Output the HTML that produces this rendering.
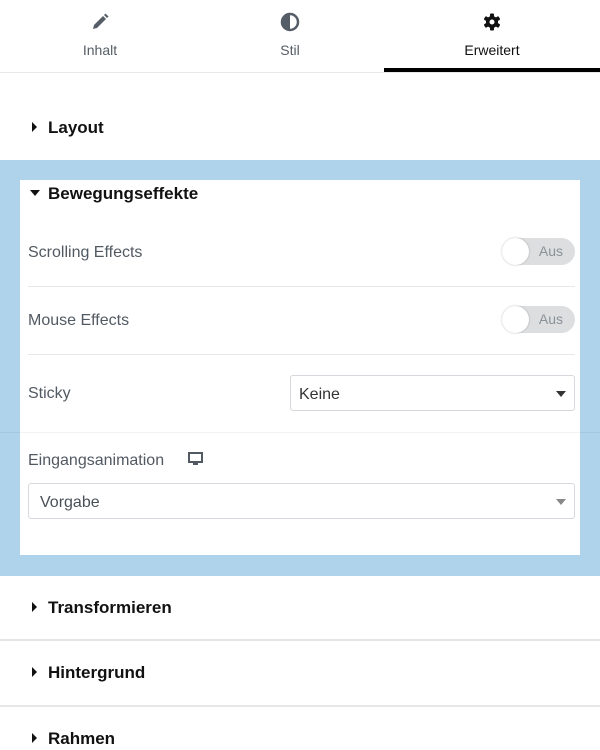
<!DOCTYPE html>
<html><head><meta charset="utf-8"><style>
*{margin:0;padding:0;box-sizing:border-box}
body{width:600px;height:750px;overflow:hidden;background:#fff;font-family:"Liberation Sans",sans-serif;position:relative}
.a{position:absolute}
.tab{position:absolute;top:0;height:72px;width:200px;text-align:center;font-size:14px;color:#555d66}
.tab svg{position:absolute;left:50%;top:12px;margin-left:-10px}
.tab span{position:absolute;top:42px;left:0;right:0}
.h{position:absolute;font-weight:bold;font-size:17px;color:#111;left:48px}
.tri{position:absolute;width:0;height:0;border-top:5px solid transparent;border-bottom:5px solid transparent;border-left:5px solid #111;left:32px}
.lbl{position:absolute;left:28px;font-size:16px;color:#515962}
.sw{position:absolute;left:502px;width:73px;height:27px;border-radius:14px;background:#dcdee0}
.sw i{position:absolute;left:0;top:0;width:27px;height:27px;border-radius:50%;background:#fff;box-shadow:0 0 2px rgba(0,0,0,.25)}
.sw b{position:absolute;right:12px;top:5px;font-size:14px;font-weight:normal;color:#8b9199}
.sep{position:absolute;left:28px;width:547px;height:1px;background:#e6e8ea}
.sel{position:absolute;border:1px solid #d5d8dc;border-radius:3px;background:#fff;font-size:16px;color:#495057}
</style></head><body>
<div class="tab" style="left:0"><svg width="20" height="20" viewBox="0 0 20 20"><path d="M3 17l1-4 9-9 3 3-9 9z" fill="#555d66"/><path d="M14 3l1.5-1.5 3 3L17 6z" fill="#555d66"/></svg><span>Inhalt</span></div>
<div class="tab" style="left:190px"><svg width="20" height="20" viewBox="0 0 20 20"><circle cx="10" cy="10" r="8" fill="none" stroke="#555d66" stroke-width="2.5"/><path d="M10 2a8 8 0 0 0 0 16z" fill="#555d66"/></svg><span>Stil</span></div>
<div class="tab" style="left:384px;width:216px;color:#111"><svg width="20" height="20" viewBox="0 0 20 20"><g fill="#111"><circle cx="10" cy="10" r="6"/><rect x="8" y="1.5" width="4" height="17" rx="1"/><rect x="8" y="1.5" width="4" height="17" rx="1" transform="rotate(60 10 10)"/><rect x="8" y="1.5" width="4" height="17" rx="1" transform="rotate(120 10 10)"/></g><circle cx="10" cy="10" r="2.5" fill="#fff"/></svg><span>Erweitert</span></div>
<div class="a" style="left:0;top:72px;width:600px;height:1px;background:#e6e8ea"></div>
<div class="a" style="left:384px;top:68px;width:216px;height:4px;background:#000"></div>

<div class="tri" style="top:122px"></div><div class="h" style="top:118px">Layout</div>

<div class="a" style="left:0;top:160px;width:600px;height:416px;background:#aed3ea"></div>
<div class="a" style="left:20px;top:180px;width:560px;height:375px;background:#fff"></div>
<div class="a" style="left:0;top:432px;width:600px;height:1px;background:rgba(0,0,0,.05)"></div>
<div class="a" style="left:30px;top:190px;width:0;height:0;border-left:5px solid transparent;border-right:5px solid transparent;border-top:6px solid #111"></div>
<div class="h" style="top:184px">Bewegungseffekte</div>

<div class="lbl" style="top:244px">Scrolling Effects</div>
<div class="sw" style="top:238px"><i></i><b>Aus</b></div>
<div class="sep" style="top:286px"></div>
<div class="lbl" style="top:312px">Mouse Effects</div>
<div class="sw" style="top:306px"><i></i><b>Aus</b></div>
<div class="sep" style="top:354px"></div>
<div class="lbl" style="top:385px">Sticky</div>
<div class="sel" style="left:290px;top:375px;width:285px;height:36px"><span class="a" style="left:8px;top:10px;color:#333">Keine</span><span class="a" style="right:8px;top:15px;border-left:5px solid transparent;border-right:5px solid transparent;border-top:6px solid #333"></span></div>
<div class="lbl" style="top:452px">Eingangsanimation</div>
<svg class="a" style="left:188px;top:452px" width="15" height="14" viewBox="0 0 15 14"><rect x="1" y="1" width="13" height="9" fill="none" stroke="#515962" stroke-width="2"/><rect x="5" y="11" width="5" height="2" fill="#515962"/></svg>
<div class="sel" style="left:28px;top:483px;width:547px;height:36px"><span class="a" style="left:11px;top:10px">Vorgabe</span><span class="a" style="right:8px;top:15px;border-left:5px solid transparent;border-right:5px solid transparent;border-top:6px solid #888"></span></div>

<div class="tri" style="top:602px"></div><div class="h" style="top:598px">Transformieren</div>
<div class="a" style="left:0;top:639px;width:600px;height:2px;background:#e6e6e6"></div>
<div class="tri" style="top:667px"></div><div class="h" style="top:663px">Hintergrund</div>
<div class="a" style="left:0;top:705px;width:600px;height:2px;background:#e6e6e6"></div>
<div class="tri" style="top:733px"></div><div class="h" style="top:729px">Rahmen</div>
</body></html>
